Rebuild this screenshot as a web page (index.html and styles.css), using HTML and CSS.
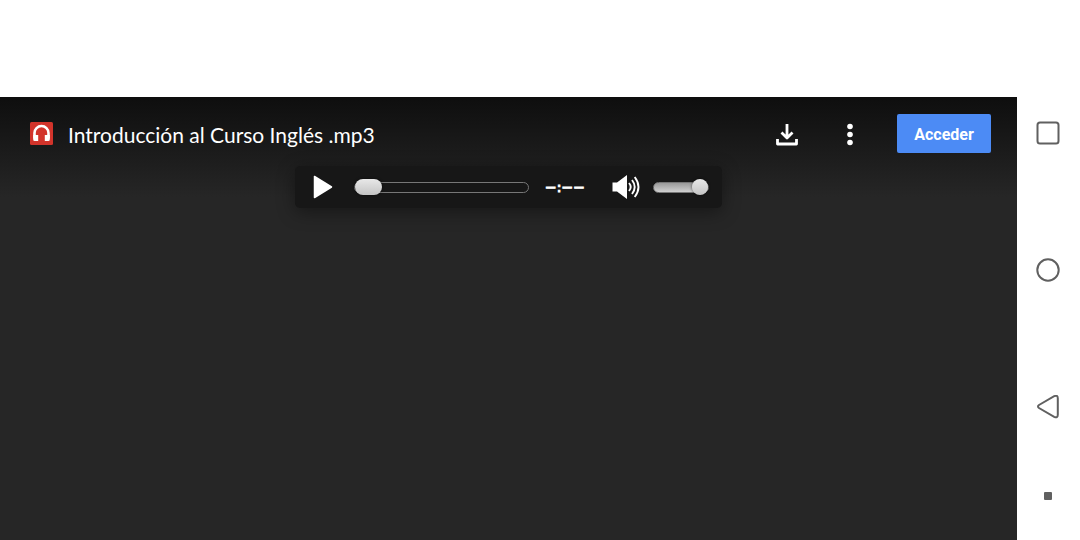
FILE: index.html
```html
<!DOCTYPE html>
<html lang="es">
<head>
<meta charset="utf-8">
<meta name="viewport" content="width=device-width, initial-scale=1">
<title>Introducción al Curso Inglés .mp3</title>
<link rel="stylesheet" href="styles.css">
</head>
<body>
<div class="screen">
  <main class="viewer">
    <header class="toolbar">
      <svg class="file-icon" viewBox="0 0 23 23" aria-hidden="true">
        <rect width="23" height="23" rx="1.5" fill="#d2342b"/>
        <path d="M4.500 16.500V11a7 7 0 0 1 14 0V16.500" fill="none" stroke="#fff" stroke-width="2.600"/>
        <path d="M3.200 13H8.200V19H4.700Q3.200 19 3.200 17.500zM14.800 13h5v4.500Q19.800 19 18.300 19H14.800z" fill="#fff"/>
      </svg>
      <h1 class="title">Introducción al Curso Inglés .mp3</h1>
      <button class="icon-button" type="button" aria-label="Descargar">
        <svg width="24" height="24" viewBox="0 0 24 24" fill="none" stroke="#fff" stroke-width="2.8" aria-hidden="true">
          <path d="M12 2v13.500M6.500 10.500l5.500 5.500 5.500-5.500M2.500 17v5h19v-5" stroke-linejoin="round"/>
        </svg>
      </button>
      <button class="icon-button" type="button" aria-label="Más acciones">
        <svg width="24" height="24" viewBox="0 0 24 24" fill="#fff" aria-hidden="true">
          <circle cx="12" cy="4.500" r="2.800"/><circle cx="12" cy="12.500" r="2.800"/><circle cx="12" cy="20.500" r="2.800"/>
        </svg>
      </button>
      <button class="sign-in" type="button">Acceder</button>
    </header>
    <section class="player" aria-label="Reproductor de audio">
      <button class="player-button" type="button" aria-label="Reproducir">
        <svg width="20" height="24" viewBox="0 0 20 24" aria-hidden="true">
          <path d="M1.500 1.500v21L18.500 12z" fill="#fff" stroke="#fff" stroke-width="1.500" stroke-linejoin="round"/>
        </svg>
      </button>
      <input class="slider progress" type="range" min="0" max="100" value="0" aria-label="Progreso">
      <span class="time">−:−−</span>
      <button class="player-button" type="button" aria-label="Silenciar">
        <svg width="28" height="26" viewBox="0 0 28 26" aria-hidden="true">
          <path d="M0.500 8.500H5L15 1v24L5 17.500H0.500z" fill="#fff"/>
          <path d="M17 9q3.400 4 0 8M20 6q5.400 7 0 14M22.700 3q7.600 10 0 20" fill="none" stroke="#fff" stroke-width="1.900"/>
        </svg>
      </button>
      <input class="slider volume" type="range" min="0" max="100" value="100" aria-label="Volumen">
    </section>
  </main>
  <nav class="system-nav" aria-label="Navegación del sistema">
    <button class="nav-button" type="button" aria-label="Recientes">
      <svg width="24" height="24" viewBox="0 0 24 24" aria-hidden="true"><rect x="1.500" y="1.500" width="21" height="21" rx="2.500"/></svg>
    </button>
    <button class="nav-button" type="button" aria-label="Inicio">
      <svg width="24" height="24" viewBox="0 0 24 24" aria-hidden="true"><circle cx="12" cy="12" r="10.700"/></svg>
    </button>
    <button class="nav-button" type="button" aria-label="Atrás">
      <svg width="24" height="24" viewBox="0 0 24 24" aria-hidden="true"><path d="M3 10 18.200 1.200q3.600-1.600 3.600 2v16.600q0 3.600-3.600 2L3 13q-2-1.500 0-3z"/></svg>
    </button>
    <button class="nav-button nav-hide" type="button" aria-label="Ocultar barra">
      <svg width="24" height="24" viewBox="0 0 24 24" aria-hidden="true"><rect class="nav-dot" x="8" y="8" width="8" height="8" rx="1"/></svg>
    </button>
  </nav>
</div>
</body>
</html>
```
FILE: styles.css
```css
* {
  box-sizing: border-box;
}

body {
  margin: 0;
  background: #fff;
  font-family: Roboto, "Liberation Sans", sans-serif;
}

button {
  padding: 0;
  border: 0;
  background: none;
  cursor: pointer;
}

svg {
  display: block;
}

.screen {
  display: flex;
  min-height: 100vh;
  padding-top: 97px;
}

.viewer {
  flex: 1;
  min-width: 0;
  background: linear-gradient(#0e0e0e, #262626 100px);
}

.toolbar {
  display: flex;
  align-items: center;
  padding: 17px 26px 13px 30px;
}

.file-icon {
  width: 23px;
  height: 23px;
  flex: none;
}

.title {
  flex: 1;
  margin: 0 0 0 15px;
  padding-top: 3px;
  color: #fff;
  font-family: Lato, sans-serif;
  font-size: 21px;
  font-weight: 400;
  line-height: 36px;
}

.icon-button {
  margin-right: 39px;
}

.icon-button + .sign-in {
  margin-left: -4px;
}

.sign-in {
  width: 94px;
  height: 39px;
  padding-top: 2px;
  border-radius: 2px;
  background: #4c8bf5;
  color: #fff;
  font: 700 16px Roboto, sans-serif;
}

.player {
  display: flex;
  align-items: center;
  width: 427px;
  max-width: 100%;
  height: 42px;
  margin: 0 auto;
  padding: 0 13px 0 18px;
  border-radius: 5px;
  background: #171717;
  box-shadow: 0 4px 18px rgba(0, 0, 0, 0.4);
}

.slider {
  appearance: none;
  height: 16px;
  margin: 0;
  background: none;
}

.slider::-webkit-slider-runnable-track {
  height: 11px;
  border: 1px solid #777;
  border-radius: 6px;
}

.slider::-webkit-slider-thumb {
  appearance: none;
  width: 16px;
  height: 16px;
  margin-top: -4px;
  border-radius: 8px;
  background: linear-gradient(#e8e8e8, #c4c4c4);
  box-shadow: 0 0 3px rgba(0, 0, 0, 0.6);
}

.progress {
  flex: 1;
  min-width: 0;
  margin: 0 16px 0 21px;
}

.progress::-webkit-slider-thumb {
  width: 27px;
}

.volume {
  width: 56px;
  margin-left: 13px;
}

.volume::-webkit-slider-runnable-track {
  background: linear-gradient(#999, #d0d0d0);
}

.time {
  margin-right: 27px;
  color: #fff;
  font: 14px "DejaVu Sans", sans-serif;
  -webkit-text-stroke: 1px #fff;
}

.system-nav {
  display: flex;
  flex-direction: column;
  align-items: center;
  gap: 113px;
  width: 63px;
  padding: 24px 1px 0 0;
}

.nav-button {
  fill: none;
  stroke: #606060;
  stroke-width: 2px;
}

.nav-hide {
  margin-top: -48px;
}

.nav-dot {
  fill: #606060;
  stroke: none;
}
```
